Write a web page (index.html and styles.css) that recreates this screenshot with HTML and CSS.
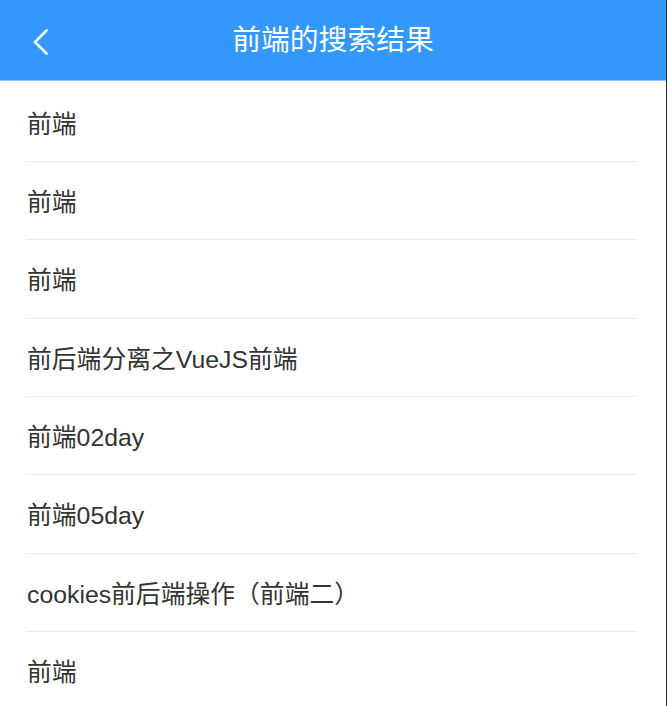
FILE: index.html
```html
<!DOCTYPE html>
<html lang="zh-CN">
<head>
<meta charset="utf-8">
<title>前端的搜索结果</title>
<link rel="stylesheet" href="styles.css">
</head>
<body>
<div class="page">
  <header class="nav-bar">
    <button class="nav-back" aria-label="返回">
      <svg width="16" height="26" viewBox="0 0 16 26"><polyline points="13.5,1.5 2,13 13.5,24.5" fill="none" stroke="#fff" stroke-width="2.6" stroke-linecap="round" stroke-linejoin="round"/></svg>
    </button>
    <h1 class="nav-title">前端的搜索结果</h1>
  </header>
  <ul class="result-list">
    <li class="result-item"><span class="result-text">前端</span></li>
    <li class="result-item"><span class="result-text">前端</span></li>
    <li class="result-item"><span class="result-text">前端</span></li>
    <li class="result-item"><span class="result-text">前后端分离之VueJS前端</span></li>
    <li class="result-item"><span class="result-text">前端02day</span></li>
    <li class="result-item"><span class="result-text">前端05day</span></li>
    <li class="result-item"><span class="result-text">cookies前后端操作（前端二）</span></li>
    <li class="result-item"><span class="result-text">前端</span></li>
  </ul>
</div>
</body>
</html>
```
FILE: styles.css
```css
* { box-sizing: border-box; }
html, body {
  margin: 0;
  padding: 0;
  height: 706px;
  overflow: hidden;
  background: #fff;
}
body {
  font-family: "Liberation Sans", "Noto Sans CJK SC", sans-serif;
  color: #333;
}
.page {
  width: 667px;
  height: 706px;
  border-right: 1px solid #2b2b2b;
  overflow: hidden;
}
.nav-bar {
  position: relative;
  height: 81px;
  background: #3497fb;
  border-bottom: 1px solid #8cc4fb;
  display: flex;
  align-items: center;
  justify-content: center;
}
.nav-back {
  position: absolute;
  left: 33px;
  top: 29px;
  padding: 0;
  margin: 0;
  border: 0;
  background: transparent;
  width: 16px;
  height: 26px;
  display: flex;
}
.nav-title {
  margin: 0;
  font-size: 28.8px;
  font-weight: normal;
  color: #fff;
  line-height: 36px;
}
.result-list {
  list-style: none;
  margin: 2.67px 0 0;
  padding: 0 29px 0 26px;
}
.result-item {
  height: 78.33px;
  padding-top: 23px;
  border-bottom: 1px solid #ebedf0;
}
.result-text {
  display: block;
  font-size: 24.8px;
  line-height: 36px;
  padding-left: 1px;
  white-space: nowrap;
}
```
